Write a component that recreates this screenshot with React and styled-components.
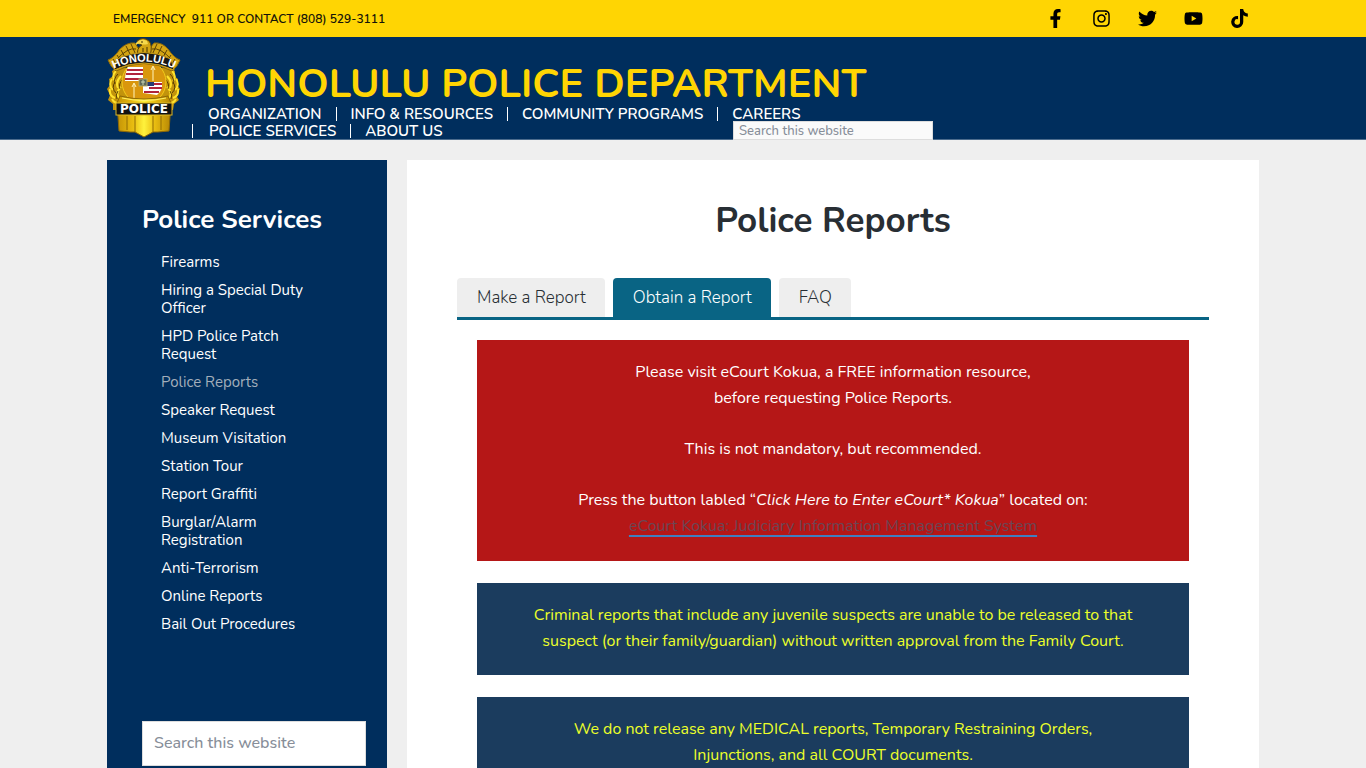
import { useState } from "react";
import styled, { createGlobalStyle } from "styled-components";
import {
  FaFacebookF,
  FaInstagram,
  FaTwitter,
  FaYoutube,
  FaTiktok,
} from "react-icons/fa";

const navRows = [
  ["ORGANIZATION", "INFO & RESOURCES", "COMMUNITY PROGRAMS", "CAREERS"],
  ["POLICE SERVICES", "ABOUT US"],
];

const socials = [
  { name: "Facebook", Icon: FaFacebookF },
  { name: "Instagram", Icon: FaInstagram },
  { name: "Twitter", Icon: FaTwitter },
  { name: "YouTube", Icon: FaYoutube },
  { name: "TikTok", Icon: FaTiktok },
];

const services = [
  "Firearms",
  "Hiring a Special Duty Officer",
  "HPD Police Patch Request",
  "Police Reports",
  "Speaker Request",
  "Museum Visitation",
  "Station Tour",
  "Report Graffiti",
  "Burglar/Alarm Registration",
  "Anti-Terrorism",
  "Online Reports",
  "Bail Out Procedures",
];

const tabs = ["Make a Report", "Obtain a Report", "FAQ"];

const Badge = () => (
  <svg width="74" height="100" viewBox="0 0 74 100" role="img" aria-label="Honolulu Police badge">
    <defs>
      <linearGradient id="gold" x1="0" x2="1" y1="0" y2="0">
        <stop offset="0" stopColor="#c39206" />
        <stop offset="0.3" stopColor="#e9bd10" />
        <stop offset="0.5" stopColor="#fff23c" />
        <stop offset="0.7" stopColor="#e9bd10" />
        <stop offset="1" stopColor="#b58605" />
      </linearGradient>
      <path id="arc" d="M8 30 Q37 17 66 30" />
    </defs>
    {/* wreath */}
    <path
      d="M10 30l-5 3 1 5-4 3 1 6-3 4 3 6-2 5 5 4 0 6 60 0 1-6 5-4-3-5 4-6-3-4 1-6-4-3 1-5-5-3z"
      fill="#c2930c"
    />
    <g fill="none" stroke="#ffe22c" strokeWidth="2">
      <path d="M9 33q-5 5-1 10M5 41q-4 6 1 11M3 51q-1 7 5 9M14 38q-6 6-3 12M14 49q-6 5-2 11M5 61q2 4 6 4" />
      <path d="M65 33q5 5 1 10M69 41q4 6-1 11M71 51q1 7-5 9M60 38q6 6 3 12M60 49q6 5 2 11M69 61q-2 4-6 4" />
    </g>
    <g fill="none" stroke="#5a4005" strokeWidth="1">
      <path d="M11 36q-5 5-3 10M8 44q-4 6 1 11M11 53q-3 4-1 8M16 41q-5 5-3 10M63 36q5 5 3 10M66 44q4 6-1 11M63 53q3 4 1 8M58 41q5 5 3 10" />
    </g>
    {/* centre seal */}
    <ellipse cx="37" cy="44" rx="22" ry="22" fill="#d9970d" stroke="#f2cc1c" />
    <path d="M21 29h15v14H18q0-8 3-14z" fill="#fff" />
    <path d="M20 32h16M19 36h17M18 41h18" stroke="#b0243c" strokeWidth="2" />
    <path d="M36 44h19v6q-2 5-5 7l-14-2z" fill="#fff" />
    <path d="M42 46h13M42 50h13M37 54h15" stroke="#b0243c" strokeWidth="2" />
    <path d="M40 44h7v4h-7z" fill="#263b73" />
    <path d="M46 43V29m-2 3 2-4 2 4M27 60V46m-2 3 2-4 2 4" stroke="#fff4bc" fill="none" />
    <rect x="32" y="41" width="8" height="7" fill="#5d6a58" stroke="#b9ad68" />
    <path d="M36 42v5m-2-3h4" stroke="#c9d5b4" />
    {/* eagle */}
    <path
      d="M1 22Q7 20 13 11Q20 4 28 5L31 10 43 10 47 5Q55 4 61 11Q67 20 73 22Q71 28 65 33Q37 18 9 33Q3 28 1 22Z"
      fill="#d3a514"
      stroke="#8d6808"
    />
    <g fill="none" stroke="#5a4106" strokeWidth="1">
      <path d="M6 21l5 8M10 17l5 8M14 12l5 9M19 8l5 10M24 6l5 11M68 21l-5 8M64 17l-5 8M60 12l-5 9M55 8l-5 10M50 6l-5 11" />
      <path d="M9 22q12-13 20-11M65 22q-12-13-20-11" />
    </g>
    <path d="M31 18q-2-8 4-11-5-1-5-4 6-5 12 0 4 4 1 15z" fill="#d3a514" stroke="#5a4106" />
    <path d="M30 4q5-4 10-1l1 3q-5 1-7 0-3-1-5 1-1-2 1-3z" fill="#f5d84c" />
    <path d="M34 4h2M36 10v6M40 9v7" stroke="#473403" fill="none" />
    {/* ribbon */}
    <path d="M10 21Q37 8 64 21L67 32Q37 18 7 32Z" fill="#171717" stroke="#c79c18" />
    <BadgeText fontSize="11" textAnchor="middle">
      <textPath href="#arc" startOffset="50%">
        HONOLULU
      </textPath>
    </BadgeText>
    {/* lower shield */}
    <path
      d="M13 58q24 6 48 0l3 7-2 28-11 1-5 0-9 5-9-5-5 0-11-1-2-28z"
      fill="url(#gold)"
      stroke="#8d6806"
    />
    <path d="M20 78v14M28 78v16M46 78v16M54 78v14" stroke="#8f6a05" />
    <path d="M15 60q22 5 44 0" stroke="#fff06b" fill="none" />
    <rect x="9" y="65" width="56" height="12" fill="#121212" stroke="#dfb723" />
    <BadgeText $wide x="37" y="75" fontSize="12" textAnchor="middle">
      POLICE
    </BadgeText>
  </svg>
);

const App = () => {
  const [activeTab, setActiveTab] = useState("Obtain a Report");

  return (
    <>
      <GlobalStyle />
      <TopBar>
        <TopInner>
          <span>EMERGENCY&nbsp; 911 OR CONTACT (808) 529-3111</span>
          <SocialList>
            {socials.map(({ name, Icon }) => (
              <li key={name}>
                <SocialLink href="#" aria-label={name}>
                  <Icon />
                </SocialLink>
              </li>
            ))}
          </SocialList>
        </TopInner>
      </TopBar>

      <Header>
        <HeaderInner>
          <Badge />
          <Branding>
            <SiteTitle href="#">HONOLULU POLICE DEPARTMENT</SiteTitle>
            <Nav>
              {navRows.map((row, index) => (
                <NavRow key={index}>
                  {row.map((item) => (
                    <NavLink key={item} href="#" $first={item === "ORGANIZATION"}>
                      {item}
                    </NavLink>
                  ))}
                  {index === 1 && (
                    <HeaderSearch
                      type="search"
                      aria-label="Search this website"
                      placeholder="Search this website"
                    />
                  )}
                </NavRow>
              ))}
            </Nav>
          </Branding>
        </HeaderInner>
      </Header>

      <Page>
        <Sidebar>
          <SidebarTitle>Police Services</SidebarTitle>
          <ServiceList>
            {services.map((item) => (
              <li key={item}>
                <ServiceLink href="#" $current={item === "Police Reports"}>
                  {item}
                </ServiceLink>
              </li>
            ))}
          </ServiceList>
          <SidebarSearch
            type="search"
            aria-label="Search this website"
            placeholder="Search this website"
          />
        </Sidebar>

        <Main>
          <PageTitle>Police Reports</PageTitle>
          <TabList role="tablist">
            {tabs.map((tab) => (
              <Tab
                key={tab}
                type="button"
                role="tab"
                aria-selected={tab === activeTab}
                $active={tab === activeTab}
                onClick={() => setActiveTab(tab)}
              >
                {tab}
              </Tab>
            ))}
          </TabList>
          <TabPanel role="tabpanel">
            <Notice $alert>
              <p>
                Please visit eCourt Kokua, a FREE information resource,
                <br />
                before requesting Police Reports.
              </p>
              <p>This is not mandatory, but recommended.</p>
              <p>
                Press the button labled “<em>Click Here to Enter eCourt* Kokua</em>” located on:
                <br />
                <CourtLink href="#">
                  eCourt Kokua: Judiciary Information Management System
                </CourtLink>
              </p>
            </Notice>
            <Notice>
              <p>
                Criminal reports that include any juvenile suspects are unable to be released to that
                <br />
                suspect (or their family/guardian) without written approval from the Family Court.
              </p>
            </Notice>
            <Notice>
              <p>
                We do not release any MEDICAL reports, Temporary Restraining Orders,
                <br />
                Injunctions, and all COURT documents.
              </p>
            </Notice>
          </TabPanel>
        </Main>
      </Page>
    </>
  );
};

export default App;

const GlobalStyle = createGlobalStyle`
  * {
    box-sizing: border-box;
  }
  body {
    margin: 0;
    background: #efefef;
    color: #282e34;
    font-family: Nunito, Lato, sans-serif;
    font-size: 16px;
    line-height: 26px;
  }
  html {
    scrollbar-width: none;
  }
  a {
    color: inherit;
    text-decoration: none;
  }
  ul, p, h1, h2 {
    margin: 0;
    padding: 0;
  }
  ul {
    list-style: none;
  }
  input, button {
    font-family: inherit;
  }
  input::placeholder {
    color: #878e99;
    opacity: 1;
  }
`;

const Inner = styled.div`
  max-width: 1152px;
  margin: 0 auto;
  display: flex;
`;

const TopBar = styled.div`
  background: #ffd503;
`;

const TopInner = styled(Inner)`
  height: 37px;
  padding: 0 10px 0 6px;
  align-items: center;
  justify-content: space-between;
  color: #14130a;
  font-size: 12px;
  font-weight: 600;
`;

const SocialList = styled.ul`
  display: flex;
  gap: 26px;
`;

const SocialLink = styled.a`
  width: 20px;
  height: 20px;
  display: flex;
  align-items: center;
  justify-content: center;
  color: #000;
  font-size: 19px;
`;

const Header = styled.header`
  background: #002e5d;
  border-bottom: 1px solid #4c6c8d;
`;

const HeaderInner = styled(Inner)`
  height: 102px;
  padding-top: 1px;
`;

const BadgeText = styled.text`
  fill: #fff;
  font-family: ${(props) =>
    props.$wide ? '"DejaVu Sans", sans-serif' : '"Liberation Sans", sans-serif'};
  font-weight: bold;
`;

const Branding = styled.div`
  flex: 1;
  padding: 25px 0 0 11px;
`;

const SiteTitle = styled.a`
  display: block;
  margin-left: 13px;
  color: #ffd503;
  font-size: 40px;
  font-weight: 700;
  line-height: 42px;
`;

const Nav = styled.nav`
  max-width: 741px;
`;

const NavRow = styled.div`
  display: flex;
  height: 17px;
  align-items: center;
`;

const NavLink = styled.a`
  padding: 0 14px;
  border-left: ${(props) => (props.$first ? "0" : "1px solid #fff")};
  color: #fff;
  font-size: 15px;
  font-weight: 600;
  line-height: 14px;
  &:first-child {
    padding-left: 16px;
  }
`;

const HeaderSearch = styled.input`
  width: 200px;
  height: 19px;
  margin: 0 0 0 auto;
  padding: 0 5px;
  border: 1px solid #dddddd;
  background: #fafafa;
  font-size: 13px;
  font-weight: 500;
`;

const Page = styled(Inner)`
  gap: 20px;
  padding-top: 20px;
`;

const Sidebar = styled.aside`
  width: 280px;
  padding: 43px 21px 40px 35px;
  background: #002e5d;
  color: #fff;
`;

const SidebarTitle = styled.h2`
  font-size: 26px;
  font-weight: 700;
  line-height: 34px;
`;

const ServiceList = styled.ul`
  width: 180px;
  margin: 16px 0 88px;
  padding-left: 19px;
  display: flex;
  flex-direction: column;
  gap: 10px;
  font-size: 15px;
  line-height: 18px;
  li {
    display: flex;
  }
`;

const ServiceLink = styled.a`
  color: ${(props) => (props.$current ? "#a3aebb" : "#fff")};
`;

const SidebarSearch = styled.input`
  width: 100%;
  height: 45px;
  padding: 0 11px 2px;
  border: 1px solid #dddddd;
  background: #fff;
  font-size: 16px;
  font-weight: 500;
`;

const Main = styled.main`
  flex: 1;
  padding: 36px 50px;
  background: #fff;
`;

const PageTitle = styled.h1`
  font-size: 35px;
  font-weight: 700;
  line-height: 50px;
  text-align: center;
`;

const TabList = styled.div`
  margin-top: 32px;
  display: flex;
  gap: 8px;
  border-bottom: 3px solid #096484;
`;

const Tab = styled.button`
  height: 39px;
  padding: 0 19px 0 20px;
  border: 0;
  border-radius: 4px 4px 0 0;
  background: ${(props) => (props.$active ? "#096484" : "#eeeeee")};
  color: ${(props) => (props.$active ? "#fff" : "#282e34")};
  font-size: 17px;
  font-weight: 300;
`;

const TabPanel = styled.div`
  padding: 20px;
  display: flex;
  flex-direction: column;
  gap: 22px;
`;

const Notice = styled.div`
  padding: 19px 20px ${(props) => (props.$alert ? "22px" : "21px")};
  background: ${(props) => (props.$alert ? "#b51717" : "#1b3c5e")};
  color: ${(props) => (props.$alert ? "#fff" : "#ecff2a")};
  text-align: center;
  p + p {
    margin-top: 25px;
  }
`;

const CourtLink = styled.a`
  color: #6b4654;
  text-decoration: underline 2px #3f7fc0;
  text-underline-offset: 4px;
  text-decoration-skip-ink: none;
`;
